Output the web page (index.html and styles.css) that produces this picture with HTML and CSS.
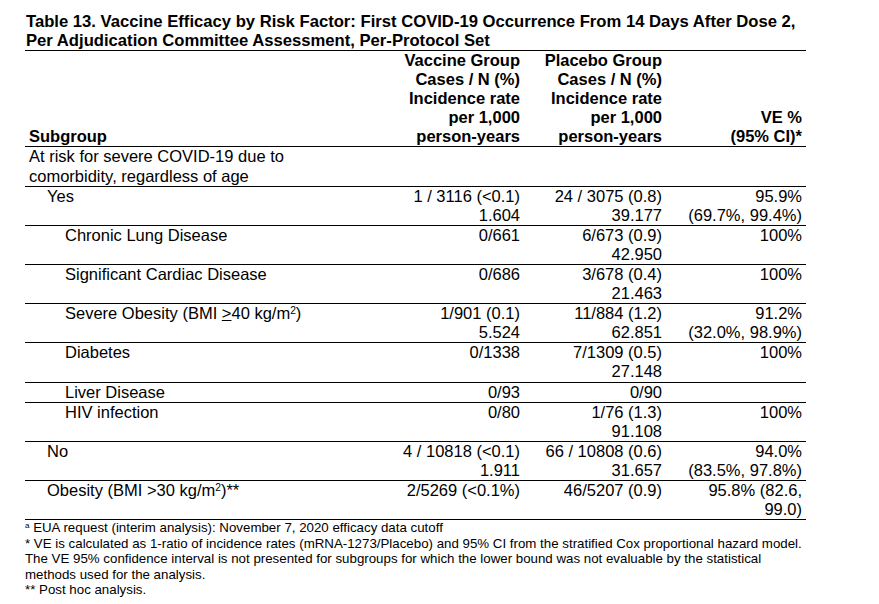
FILE: index.html
```html
<!DOCTYPE html>
<html>
<head>
<meta charset="utf-8">
<link rel="stylesheet" href="styles.css">
</head>
<body>
<div class="page">
  <h1 class="title">Table 13. Vaccine Efficacy by Risk Factor: First COVID-19 Occurrence From 14 Days After Dose 2,<br>Per Adjudication Committee Assessment, Per-Protocol Set</h1>
  <table class="efficacy">
    <colgroup>
      <col class="c-sub">
      <col class="c-vac">
      <col class="c-pla">
      <col class="c-ve">
    </colgroup>
    <thead>
      <tr>
        <th class="left">Subgroup</th>
        <th>Vaccine Group<br>Cases / N (%)<br>Incidence rate<br>per 1,000<br>person-years</th>
        <th>Placebo Group<br>Cases / N (%)<br>Incidence rate<br>per 1,000<br>person-years</th>
        <th>VE %<br>(95% CI)*</th>
      </tr>
    </thead>
    <tbody>
      <tr>
        <td class="left">At risk for severe COVID-19 due to<br>comorbidity, regardless of age</td>
        <td></td><td></td><td></td>
      </tr>
      <tr>
        <td class="left lvl1">Yes</td>
        <td>1 / 3116 (&lt;0.1)<br>1.604</td>
        <td>24 / 3075 (0.8)<br>39.177</td>
        <td>95.9%<br>(69.7%, 99.4%)</td>
      </tr>
      <tr>
        <td class="left lvl2">Chronic Lung Disease</td>
        <td>0/661</td>
        <td>6/673 (0.9)<br>42.950</td>
        <td>100%</td>
      </tr>
      <tr>
        <td class="left lvl2">Significant Cardiac Disease</td>
        <td>0/686</td>
        <td>3/678 (0.4)<br>21.463</td>
        <td>100%</td>
      </tr>
      <tr>
        <td class="left lvl2">Severe Obesity (BMI <u>&gt;</u>40 kg/m<sup>2</sup>)</td>
        <td>1/901 (0.1)<br>5.524</td>
        <td>11/884 (1.2)<br>62.851</td>
        <td>91.2%<br>(32.0%, 98.9%)</td>
      </tr>
      <tr>
        <td class="left lvl2">Diabetes</td>
        <td>0/1338</td>
        <td>7/1309 (0.5)<br>27.148</td>
        <td>100%</td>
      </tr>
      <tr>
        <td class="left lvl2">Liver Disease</td>
        <td>0/93</td>
        <td>0/90</td>
        <td></td>
      </tr>
      <tr>
        <td class="left lvl2">HIV infection</td>
        <td>0/80</td>
        <td>1/76 (1.3)<br>91.108</td>
        <td>100%</td>
      </tr>
      <tr>
        <td class="left lvl1">No</td>
        <td>4 / 10818 (&lt;0.1)<br>1.911</td>
        <td>66 / 10808 (0.6)<br>31.657</td>
        <td>94.0%<br>(83.5%, 97.8%)</td>
      </tr>
      <tr>
        <td class="left lvl1">Obesity (BMI &gt;30 kg/m<sup>2</sup>)**</td>
        <td>2/5269 (&lt;0.1%)</td>
        <td>46/5207 (0.9)</td>
        <td>95.8% (82.6,<br>99.0)</td>
      </tr>
    </tbody>
  </table>
  <div class="notes">
    <p><sup>a</sup> EUA request (interim analysis): November 7, 2020 efficacy data cutoff</p>
    <p>* VE is calculated as 1-ratio of incidence rates (mRNA-1273/Placebo) and 95% CI from the stratified Cox proportional hazard model.</p>
    <p>The VE 95% confidence interval is not presented for subgroups for which the lower bound was not evaluable by the statistical<br>methods used for the analysis.</p>
    <p>** Post hoc analysis.</p>
  </div>
</div>
</body>
</html>
```

FILE: styles.css
```css
html, body {
  margin: 0;
  padding: 0;
  background: #fff;
}

body {
  font-family: "Liberation Sans", Arial, sans-serif;
  color: #000;
}

.page {
  padding: 12px 0 0 25px;
}

.title {
  margin: 0;
  padding-left: 1px;
  font-size: 16.65px;
  font-weight: bold;
  line-height: 19.2px;
  white-space: nowrap;
}

.efficacy {
  width: 781px;
  border-collapse: collapse;
  table-layout: fixed;
  font-size: 16.5px;
  line-height: 19.1px;
}

.c-sub { width: 355px; }
.c-vac { width: 144px; }
.c-pla { width: 142px; }
.c-ve  { width: 140px; }

.efficacy thead tr {
  border-top: 1px solid #000;
}

.efficacy tr {
  border-bottom: 1px solid #000;
}

.efficacy th,
.efficacy td {
  padding: 0 4px;
  text-align: right;
  vertical-align: top;
  white-space: nowrap;
}

.efficacy th {
  font-weight: bold;
  line-height: 19px;
  vertical-align: bottom;
}

.efficacy .left {
  text-align: left;
}

.efficacy .lvl1 { padding-left: 22px; }
.efficacy .lvl2 { padding-left: 40px; }

sup {
  font-size: 0.62em;
  line-height: 0;
  vertical-align: 0.5em;
}

.notes {
  font-size: 13.3px;
  line-height: 15.5px;
  white-space: nowrap;
}

.notes p {
  margin: 0;
}

.notes sup {
  font-size: 0.6em;
  vertical-align: 0.55em;
}
```
